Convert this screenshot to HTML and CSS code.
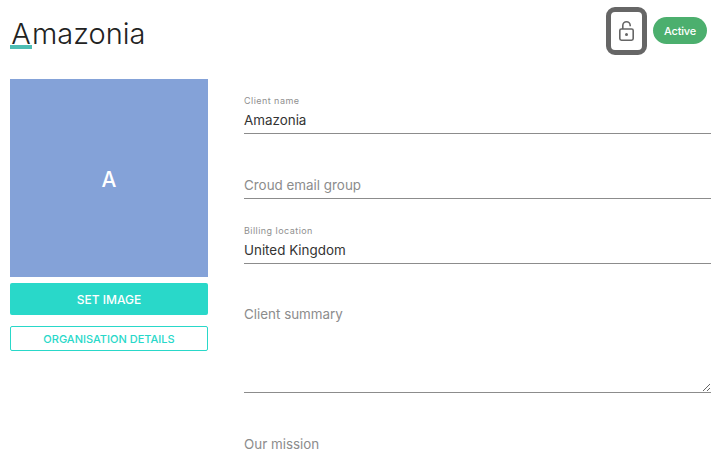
FILE: index.html
```html
<!DOCTYPE html>
<html lang="en">
<head>
<meta charset="utf-8">
<title>Amazonia</title>
<link rel="stylesheet" href="styles.css">
</head>
<body>
<div class="page">
  <header class="header">
    <h1 class="title"><span class="title-first">A</span>mazonia</h1>
    <div class="header-actions">
      <button class="lock-btn" type="button" aria-label="Unlocked">
        <svg class="lock-icon" width="15" height="20" viewBox="0 0 15 20" fill="none" stroke="#666" stroke-width="1.6">
          <path d="M3.8 8V4.5a3.7 3.7 0 0 1 7.4 0V5.2"/>
          <rect x="0.8" y="8" width="13.4" height="11.2" rx="1.6"/>
          <circle cx="7.5" cy="13.6" r="1.5" fill="#666" stroke="none"/>
        </svg>
      </button>
      <span class="status">Active</span>
    </div>
  </header>
  <main class="content">
    <aside class="side">
      <div class="avatar">A</div>
      <button class="btn btn-solid" type="button">SET IMAGE</button>
      <button class="btn btn-outline" type="button">ORGANISATION DETAILS</button>
    </aside>
    <section class="form">
      <div class="field">
        <div class="field-label">Client name</div>
        <div class="field-value">Amazonia</div>
      </div>
      <div class="field">
        <div class="field-value placeholder">Croud email group</div>
      </div>
      <div class="field">
        <div class="field-label">Billing location</div>
        <div class="field-value">United Kingdom</div>
      </div>
      <div class="field field-area">
        <textarea class="area" placeholder="Client summary"></textarea>
      </div>
      <div class="field field-area">
        <textarea class="area" placeholder="Our mission"></textarea>
      </div>
    </section>
  </main>
</div>
</body>
</html>
```
FILE: styles.css
```css
* { box-sizing: border-box; }
html, body { margin: 0; padding: 0; height: 100%; overflow: hidden; background: #fff; }
body { font-family: "Inter", "Liberation Sans", sans-serif; color: #222; }
.page { padding: 7px 8px 0 10px; }
.header { display: flex; justify-content: space-between; align-items: flex-start; height: 72px; padding-right: 4px; }
.title { margin: 8px 0 0; font-size: 29px; line-height: 38px; font-weight: 300; color: #222; position: relative; }
.title-first { display: inline-block; position: relative; width: 22px; text-align: center; }
.title-first::after { content: ""; position: absolute; left: 0; right: 0; bottom: 4px; height: 4px; background: #4dbdb3; }
.header-actions { display: flex; align-items: center; gap: 6px; }
.lock-btn { width: 41px; height: 48px; padding: 0; border: 5px solid #666; border-radius: 9px; background: #fff; display: flex; align-items: center; justify-content: center; }
.status { width: 54px; height: 27px; margin-top: -1px; border-radius: 14px; background: #4caf6e; color: #fff; font-size: 11px; font-weight: 500; letter-spacing: -0.2px; display: flex; align-items: center; justify-content: center; }
.content { display: flex; gap: 36px; }
.side { width: 198px; flex: none; display: flex; flex-direction: column; }
.avatar { height: 198px; padding-top: 3px; background: #84a2d8; color: #fff; font-size: 21px; font-weight: 500; display: flex; align-items: center; justify-content: center; }
.btn { font-family: inherit; font-size: 11px; font-weight: 500; padding: 0; border-radius: 2px; }
.btn-solid { margin-top: 6px; height: 32px; border: 0; background: #29d8c9; color: #fff; font-size: 12px; }
.btn-outline { margin-top: 11px; height: 25px; border: 1px solid #29d8c9; background: #fff; color: #29d8c9; }
.form { flex: 1; display: flex; flex-direction: column; }
.field { height: 65px; display: flex; flex-direction: column; justify-content: flex-end; border-bottom: 1px solid #8c8c8c; font-size: 13.4px; }
.field:first-child { height: 55px; }
.field-label { font-size: 9px; line-height: 12px; color: #8f8f8f; letter-spacing: 0.45px; margin-bottom: 3px; }
.field-value { line-height: 20px; padding-bottom: 3px; color: #333; }
.placeholder { color: #8c8c8c; }
.field-area { height: 129px; }
.field-area + .field-area { margin-top: 1px; }
.area { display: block; width: 100%; height: 88px; padding: 0; border: 0; outline: 0; font: inherit; line-height: 20px; resize: vertical; color: #333; }
.area::placeholder { color: #8c8c8c; opacity: 1; }
```
